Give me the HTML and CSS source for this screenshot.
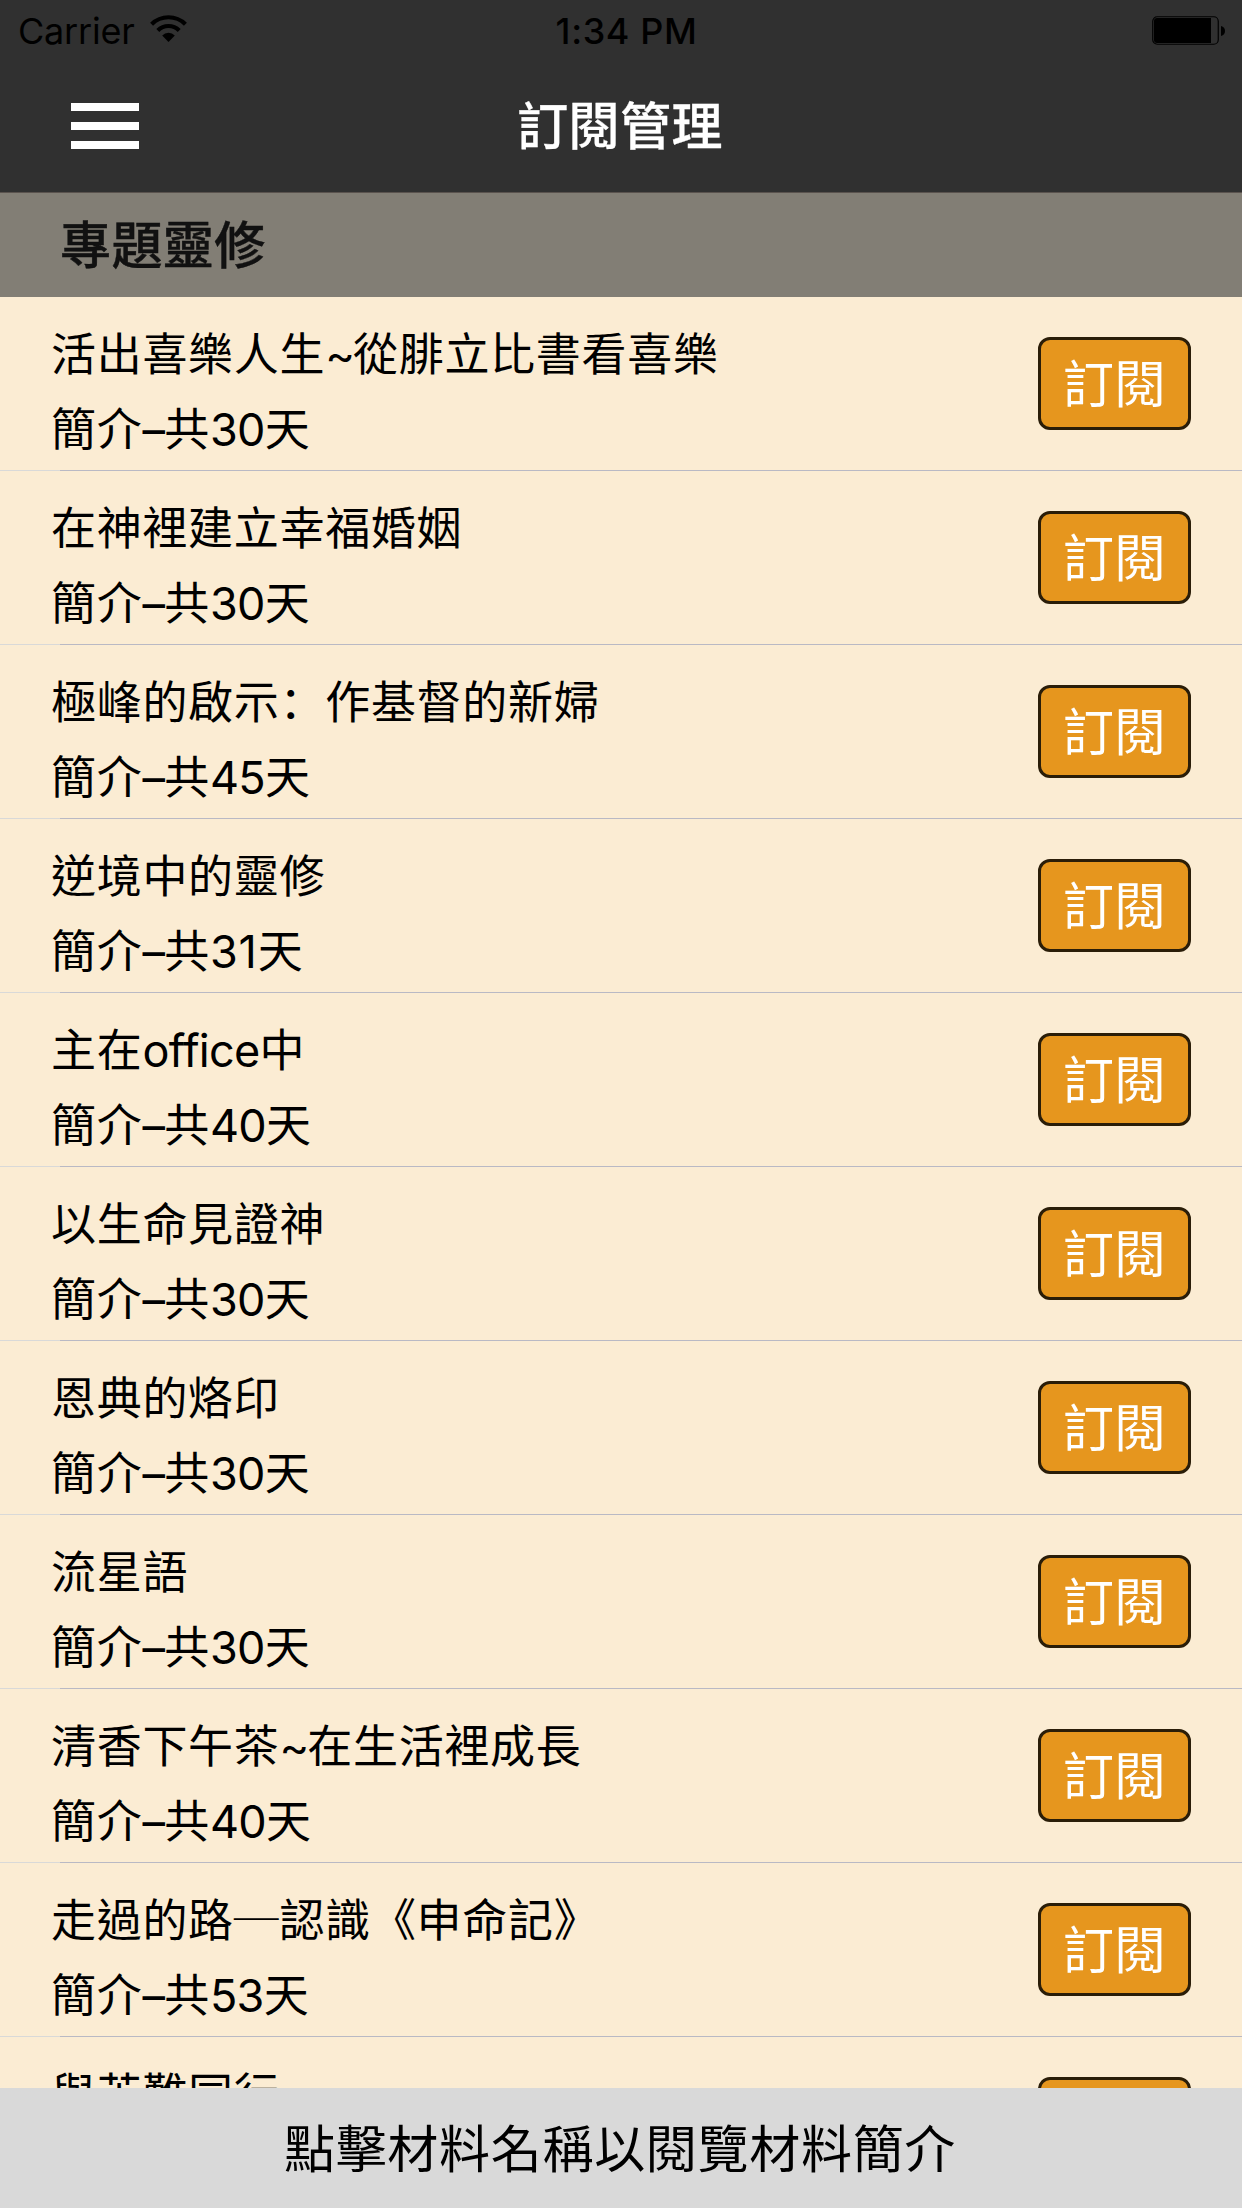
FILE: index.html
```html
<!DOCTYPE html>
<html lang="zh-Hant">
<head>
  <meta charset="UTF-8">
  <title>訂閱管理</title>
  <link rel="stylesheet" href="styles.css">
</head>
<body>
  <div class="screen">
    <header class="top-bar">
      <div class="status-bar">
        <div class="status-left">
          <span class="carrier">Carrier</span>
          <svg class="wifi-icon" width="37" height="28" viewBox="0 0 37 28">
            <path d="M1.6 9.2 A24 24 0 0 1 35.4 9.2" fill="none" stroke="#000" stroke-width="4.2"/>
            <path d="M7.8 15.4 A15.2 15.2 0 0 1 29.2 15.4" fill="none" stroke="#000" stroke-width="4.2"/>
            <path d="M12.2 20.4 A9 9 0 0 1 24.8 20.4 L18.5 27 Z" fill="#000"/>
          </svg>
        </div>
        <span class="time">1:34 PM</span>
        <div class="status-right">
          <svg width="74" height="30" viewBox="0 0 74 30">
            <rect x="0.75" y="0.75" width="65.5" height="27.5" rx="4.5" fill="none" stroke="#000" stroke-width="1.2"/>
            <path d="M5 2 H59 V27 H5 Q2 27 2 24 V5 Q2 2 5 2 Z" fill="#000"/>
            <path d="M69 10 Q73 11 73 15 Q73 19 69 20 Z" fill="#000"/>
          </svg>
        </div>
      </div>
      <nav class="nav-bar">
        <button class="menu-button" aria-label="選單">
          <span></span>
          <span></span>
          <span></span>
        </button>
        <h1>訂閱管理</h1>
      </nav>
    </header>

    <h2 class="section-header">專題靈修</h2>

    <ul class="list">
      <li class="row">
        <div class="row-text">
          <div>活出喜樂人生<span class="latin tilde">~</span>從腓立比書看喜樂</div>
          <div>簡介<span class="latin">–</span>共<span class="latin">30</span>天</div>
        </div>
        <button class="subscribe-button">訂閱</button>
      </li>
      <li class="row">
        <div class="row-text">
          <div>在神裡建立幸福婚姻</div>
          <div>簡介<span class="latin">–</span>共<span class="latin">30</span>天</div>
        </div>
        <button class="subscribe-button">訂閱</button>
      </li>
      <li class="row">
        <div class="row-text">
          <div>極峰的啟示<span class="colon" lang="zh-Hans">：</span>作基督的新婦</div>
          <div>簡介<span class="latin">–</span>共<span class="latin">45</span>天</div>
        </div>
        <button class="subscribe-button">訂閱</button>
      </li>
      <li class="row">
        <div class="row-text">
          <div>逆境中的靈修</div>
          <div>簡介<span class="latin">–</span>共<span class="latin narrow-digit">31</span>天</div>
        </div>
        <button class="subscribe-button">訂閱</button>
      </li>
      <li class="row">
        <div class="row-text">
          <div>主在<span class="latin">office</span>中</div>
          <div>簡介<span class="latin">–</span>共<span class="latin">40</span>天</div>
        </div>
        <button class="subscribe-button">訂閱</button>
      </li>
      <li class="row">
        <div class="row-text">
          <div>以生命見證神</div>
          <div>簡介<span class="latin">–</span>共<span class="latin">30</span>天</div>
        </div>
        <button class="subscribe-button">訂閱</button>
      </li>
      <li class="row">
        <div class="row-text">
          <div>恩典的烙印</div>
          <div>簡介<span class="latin">–</span>共<span class="latin">30</span>天</div>
        </div>
        <button class="subscribe-button">訂閱</button>
      </li>
      <li class="row">
        <div class="row-text">
          <div>流星語</div>
          <div>簡介<span class="latin">–</span>共<span class="latin">30</span>天</div>
        </div>
        <button class="subscribe-button">訂閱</button>
      </li>
      <li class="row">
        <div class="row-text">
          <div>清香下午茶<span class="latin tilde">~</span>在生活裡成長</div>
          <div>簡介<span class="latin">–</span>共<span class="latin">40</span>天</div>
        </div>
        <button class="subscribe-button">訂閱</button>
      </li>
      <li class="row">
        <div class="row-text">
          <div>走過的路<span class="rule-char">─</span>認識《申命記》</div>
          <div>簡介<span class="latin">–</span>共<span class="latin">53</span>天</div>
        </div>
        <button class="subscribe-button">訂閱</button>
      </li>
      <li class="row">
        <div class="row-text">
          <div>與苦難同行</div>
        </div>
        <button class="subscribe-button">訂閱</button>
      </li>
    </ul>

    <footer class="hint-bar">點擊材料名稱以閱覽材料簡介</footer>
  </div>
</body>
</html>
```
FILE: styles.css
```css
* {
  box-sizing: border-box;
}

body {
  margin: 0;
  font-family: Inter, "Noto Sans CJK TC", sans-serif;
  background-color: #fbecd3;
  color: #000;
}

h1,
h2,
ul {
  margin: 0;
  padding: 0;
}

.screen {
  display: flex;
  flex-direction: column;
  width: 1242px;
  height: 2208px;
  overflow: hidden;
}

.top-bar {
  flex: none;
  height: 193px;
  background-color: #303030;
  border-bottom: 1px solid #5a534e;
}

/* status bar */
.status-bar {
  display: grid;
  grid-template-columns: 1fr auto 1fr;
  align-items: center;
  height: 60px;
  padding: 1px 16px 0 18px;
  font-size: 36px;
  line-height: 60px;
}

.status-left {
  display: flex;
  align-items: center;
  gap: 15px;
}

.carrier {
  letter-spacing: -0.2px;
}

.wifi-icon {
  margin-top: -4px;
}

.time {
  padding-left: 9px;
  font-weight: 500;
  letter-spacing: 0.6px;
}

.status-right {
  display: flex;
  justify-content: flex-end;
}

/* navigation */
.nav-bar {
  display: grid;
  grid-template-columns: 1fr auto 1fr;
  align-items: center;
  height: 132px;
  padding: 0 71px;
}

.menu-button {
  display: flex;
  flex-direction: column;
  gap: 11px;
  width: 68px;
  padding: 0;
  background: none;
  border: none;
}

.menu-button span {
  height: 8px;
  background-color: #fff;
}

.nav-bar h1 {
  padding: 2px 2px 0 0;
  font-size: 51px;
  font-weight: 500;
  line-height: 72px;
  letter-spacing: 0.4px;
  color: #fff;
  -webkit-text-stroke: 0.3px #fff;
}

.section-header {
  flex: none;
  height: 104px;
  padding: 1px 0 0 60px;
  background-color: #827e75;
  color: #111;
  font-size: 51px;
  font-weight: 500;
  line-height: 104px;
  letter-spacing: 0.4px;
  -webkit-text-stroke: 0.4px #111;
}

/* list */
.list {
  flex: 1;
  min-height: 0;
  overflow: hidden;
  list-style: none;
}

.row {
  display: flex;
  justify-content: space-between;
  align-items: center;
  height: 174px;
  padding: 0 51px 1px 51px;
  /* separator is paler in the left inset */
  background: linear-gradient(to right, #d9d9d8 60px, #b9b9c4 60px) left bottom / 100% 1px no-repeat;
}

.row-text {
  align-self: flex-start;
  padding-top: 20px;
  font-size: 45px;
  line-height: 75px;
  letter-spacing: 0.7px;
  white-space: nowrap;
}

.latin {
  letter-spacing: -0.7px;
}

.tilde {
  letter-spacing: -2px;
}

.narrow-digit {
  letter-spacing: 0.8px;
}

.colon {
  font-family: "Noto Sans CJK SC", sans-serif;
  line-height: 0;
}

.rule-char {
  font-family: "Noto Sans CJK TC", sans-serif;
  line-height: 0;
}

.subscribe-button {
  width: 153px;
  height: 93px;
  padding: 2px 0 0;
  background-color: #e6961e;
  border: 3px solid #2a1d08;
  border-radius: 12px;
  color: #fff;
  font-family: inherit;
  font-size: 51px;
  line-height: 80px;
  letter-spacing: 0.6px;
}

.hint-bar {
  flex: none;
  height: 120px;
  padding: 2px 2px 0 0;
  background-color: #d9d9d9;
  font-size: 51px;
  line-height: 120px;
  letter-spacing: 0.7px;
  text-align: center;
}
```
